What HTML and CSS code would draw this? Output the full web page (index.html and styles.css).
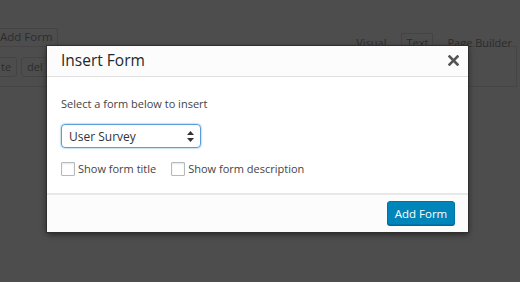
FILE: index.html
```html
<!DOCTYPE html>
<html lang="en">
<head>
    <meta charset="UTF-8">
    <title>Insert Form</title>
    <link rel="stylesheet" href="styles.css">
</head>
<body>
    <div class="editor">
        <div class="editor-tools">
            <div class="media-button">Add Form</div>
            <div class="editor-tabs">
                <span class="tab">Visual</span>
                <span class="tab active">Text</span>
                <span class="tab">Page Builder</span>
            </div>
        </div>
        <div class="editor-box">
            <div class="quicktags">
                <span class="qt-button">te</span>
                <span class="qt-button">del</span>
            </div>
        </div>
    </div>

    <div class="modal">
        <div class="modal-header">
            <h1 class="modal-title">Insert Form</h1>
            <span class="modal-close">
                <svg width="11" height="11" viewBox="0 0 11 11"><path d="M1.5 1.5 L9.5 9.5 M9.5 1.5 L1.5 9.5" stroke="#555" stroke-width="2.6" stroke-linecap="square"/></svg>
            </span>
        </div>
        <div class="modal-body">
            <p class="modal-label">Select a form below to insert</p>
            <div class="select">
                <span>User Survey</span>
                <svg width="7" height="11" viewBox="0 0 7 11"><path d="M3.5 0 L7 4 H0 Z M3.5 11 L0 7 H7 Z" fill="#333"/></svg>
            </div>
            <div class="options">
                <label class="check"><span class="box"></span>Show form title</label>
                <label class="check"><span class="box"></span>Show form description</label>
            </div>
        </div>
        <div class="modal-footer">
            <button class="button-primary">Add Form</button>
        </div>
    </div>
</body>
</html>
```

FILE: styles.css
```css
* {
    margin: 0;
    padding: 0;
    box-sizing: border-box;
}

body {
    background: #4d4d4d;
    width: 520px;
    height: 282px;
    overflow: hidden;
    font-family: 'Open Sans', 'Noto Sans', sans-serif;
    color: #444;
    position: relative;
}

/* editor behind the overlay */
.editor {
    color: #2c2c2c;
}

.editor-tools {
    display: flex;
    justify-content: space-between;
    align-items: flex-end;
    height: 46px;
}

.media-button {
    margin-left: -7px;
    height: 17px;
    padding: 0 4px 0 6px;
    border: 1px solid #444;
    border-bottom: none;
    border-radius: 3px 3px 0 0;
    font-size: 11.5px;
    line-height: 16px;
    margin-bottom: 1px;
}

.editor-tabs {
    display: flex;
    align-items: flex-end;
    margin-right: 8px;
}

.tab {
    font-size: 11px;
    line-height: 16px;
    padding-top: 2px;
    height: 13px;
    white-space: nowrap;
}

.tab.active {
    width: 32px;
    border: 1px solid #444;
    border-bottom: none;
    padding-top: 1px;
    text-align: center;
    margin: 0 14px 0 15px;
}

.editor-box {
    border-top: 1px solid #454545;
    border-right: 1px solid #454545;
    margin-right: 3px;
    height: 41px;
}

.quicktags {
    display: flex;
    gap: 4px;
    padding: 10px 0 0 0;
    height: 40px;
    border-bottom: 1px solid #454545;
}

.qt-button {
    font-size: 11px;
    line-height: 17px;
    height: 20px;
    padding: 0 5px;
    border: 1px solid #444;
    border-radius: 3px;
}

.qt-button:first-child {
    margin-left: -4px;
    padding-left: 4px;
    padding-right: 5px;
}

/* modal */
.modal {
    position: absolute;
    left: 47px;
    top: 46px;
    width: 421px;
    height: 186px;
    background: #fff;
    display: flex;
    flex-direction: column;
    box-shadow: 0 0 0 1px #2f2f2f, 0 2px 6px rgba(0, 0, 0, 0.6);
}

.modal-header {
    height: 31px;
    background: #fcfcfc;
    border-bottom: 1px solid #dfdfdf;
    display: flex;
    align-items: center;
    justify-content: space-between;
    padding: 0 9px 0 14px;
}

.modal-title {
    font-size: 15.5px;
    font-weight: 400;
    color: #23282d;
    line-height: 1;
}

.modal-close {
    display: flex;
    margin-bottom: 1px;
}

.modal-body {
    flex: 1;
    padding: 19px 14px 0 14px;
}

.modal-label {
    font-size: 11px;
    line-height: 16px;
    color: #444;
}

.select {
    margin-top: 12px;
    width: 140px;
    height: 24px;
    border: 1px solid #5b9dd9;
    border-radius: 4px;
    box-shadow: 0 0 2px rgba(30, 140, 190, 0.8);
    display: flex;
    align-items: center;
    justify-content: space-between;
    padding: 0 6px 0 7px;
    font-size: 12px;
    color: #333;
}

.options {
    display: flex;
    gap: 15px;
    margin-top: 13px;
}

.check {
    display: flex;
    align-items: center;
    gap: 3px;
    font-size: 11px;
    color: #444;
}

.box {
    width: 14px;
    height: 14px;
    border: 1px solid #b4b9be;
    border-radius: 1px;
    background: #fff;
    box-shadow: inset 0 1px 2px rgba(0, 0, 0, 0.1);
}

.modal-footer {
    height: 39px;
    background: #fcfcfc;
    border-top: 2px solid #e8e8e8;
    display: flex;
    align-items: center;
    justify-content: flex-end;
    padding: 0 13px 1px 0;
}

.button-primary {
    font-family: inherit;
    width: 68px;
    height: 24px;
    background: #0085ba;
    border: 1px solid #0073aa;
    border-radius: 3px;
    box-shadow: 0 1px 0 #006799;
    color: #fff;
    font-size: 11.5px;
}
```
